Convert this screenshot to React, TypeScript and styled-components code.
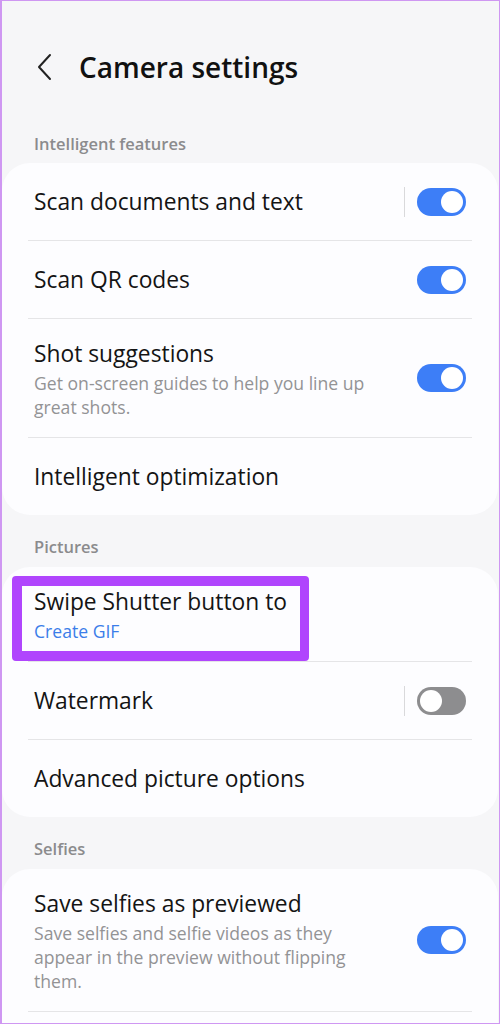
import React from "react";
import styled, { createGlobalStyle } from "styled-components";

const GlobalStyle = createGlobalStyle`
  body {
    margin: 0;
    background: #f6f6f8;
    font-family: "Open Sans", Roboto, sans-serif;
  }
`;

const Screen = styled.div`
  position: relative;
  box-sizing: border-box;
  width: 500px;
  height: 1024px;
  overflow: hidden;
  background: #f6f6f8;
  border: 1px solid #cf97f2;
  border-left-width: 2px;
`;

const Header = styled.div`
  display: flex;
  align-items: center;
  height: 116px;
  padding: 16px 0 0 33px;
  box-sizing: border-box;
`;

const BackButton = styled.div`
  width: 22px;
  height: 30px;
  display: flex;
  align-items: center;
  margin-right: 22px;
`;

const Title = styled.h1`
  margin: 0;
  font-size: 28px;
  font-weight: 600;
  color: #111;
`;

const SectionLabel = styled.div<{ $first?: boolean }>`
  box-sizing: border-box;
  height: ${(p) => (p.$first ? "46px" : "52px")};
  padding: ${(p) => (p.$first ? "17px" : "22px")} 32px 0;
  font-size: 16.5px;
  line-height: 20px;
  font-weight: 600;
  color: #8b8b8d;
`;

const Card = styled.div`
  margin: 0 1px 0 0;
  background: #fdfdff;
  border-radius: 28px;
  overflow: hidden;
`;

const Row = styled.div<{ $height?: number }>`
  display: flex;
  align-items: center;
  min-height: ${(p) => p.$height ?? 77}px;
  box-sizing: border-box;
  padding: 0 32px;
`;

const Divider = styled.div`
  height: 1px;
  margin: 0 26px;
  background: #e5e5e7;
`;

const TextBlock = styled.div<{ $multi?: boolean }>`
  flex: 1;
  padding: ${(p) => (p.$multi ? "21px 0 18px" : "0")};
`;

const RowTitle = styled.div`
  font-size: 22.8px;
  line-height: 28px;
  color: #141414;
`;

const RowSub = styled.div<{ $link?: boolean }>`
  margin-top: 3px;
  font-size: 17.6px;
  line-height: 24px;
  color: ${(p) => (p.$link ? "#3b7de9" : "#939395")};
  max-width: ${(p) => (p.$link ? "none" : "345px")};
`;

const Separator = styled.div`
  width: 1px;
  height: 30px;
  background: #d9d9db;
  margin-right: 12px;
`;

const Track = styled.div<{ $on: boolean }>`
  position: relative;
  width: 49px;
  height: 28px;
  border-radius: 14px;
  background: ${(p) => (p.$on ? "#3d7ef7" : "#8d8d8f")};
  flex-shrink: 0;
`;

const Knob = styled.div<{ $on: boolean }>`
  position: absolute;
  top: 3px;
  left: ${(p) => (p.$on ? "24px" : "3px")};
  width: 22px;
  height: 22px;
  border-radius: 50%;
  background: #fff;
`;

// annotation frame drawn over the "Swipe Shutter button to" row
const Highlight = styled.div`
  position: absolute;
  left: 10px;
  top: 575px;
  width: 297px;
  height: 85px;
  box-sizing: border-box;
  border: 10px solid #b045fd;
  border-right-width: 9px;
  border-radius: 4px;
  pointer-events: none;
`;

function Toggle({ on, separator }: { on: boolean; separator?: boolean }) {
  return (
    <>
      {separator && <Separator />}
      <Track $on={on}>
        <Knob $on={on} />
      </Track>
    </>
  );
}

type Item = {
  title: string;
  sub?: string;
  link?: boolean;
  toggle?: boolean;
  on?: boolean;
  separator?: boolean;
  height?: number;
};

const sections: { label: string; items: Item[] }[] = [
  {
    label: "Intelligent features",
    items: [
      { title: "Scan documents and text", toggle: true, on: true, separator: true },
      { title: "Scan QR codes", toggle: true, on: true },
      {
        title: "Shot suggestions",
        sub: "Get on-screen guides to help you line up great shots.",
        toggle: true,
        on: true,
      },
      { title: "Intelligent optimization" },
    ],
  },
  {
    label: "Pictures",
    items: [
      { title: "Swipe Shutter button to", sub: "Create GIF", link: true },
      { title: "Watermark", toggle: true, on: false, separator: true },
      { title: "Advanced picture options" },
    ],
  },
  {
    label: "Selfies",
    items: [
      {
        title: "Save selfies as previewed",
        sub: "Save selfies and selfie videos as they appear in the preview without flipping them.",
        toggle: true,
        on: true,
      },
      { title: "", height: 40 },
    ],
  },
];

export default function App() {
  return (
    <>
      <GlobalStyle />
      <Screen>
        <Header>
          <BackButton>
            <svg width="18" height="28" viewBox="0 0 18 28">
              <path
                d="M15 2 L4 14 L15 26"
                fill="none"
                stroke="#222"
                strokeWidth="2"
                strokeLinecap="round"
                strokeLinejoin="round"
              />
            </svg>
          </BackButton>
          <Title>Camera settings</Title>
        </Header>
        {sections.map((section, si) => (
          <React.Fragment key={section.label}>
            <SectionLabel $first={si === 0}>{section.label}</SectionLabel>
            <Card>
              {section.items.map((item, i) => (
                <React.Fragment key={i}>
                  {i > 0 && <Divider />}
                  <Row $height={item.height}>
                    <TextBlock $multi={!!item.sub}>
                      <RowTitle>{item.title}</RowTitle>
                      {item.sub && <RowSub $link={item.link}>{item.sub}</RowSub>}
                    </TextBlock>
                    {item.toggle && (
                      <Toggle on={!!item.on} separator={item.separator} />
                    )}
                  </Row>
                </React.Fragment>
              ))}
            </Card>
          </React.Fragment>
        ))}
        <Highlight />
      </Screen>
    </>
  );
}
